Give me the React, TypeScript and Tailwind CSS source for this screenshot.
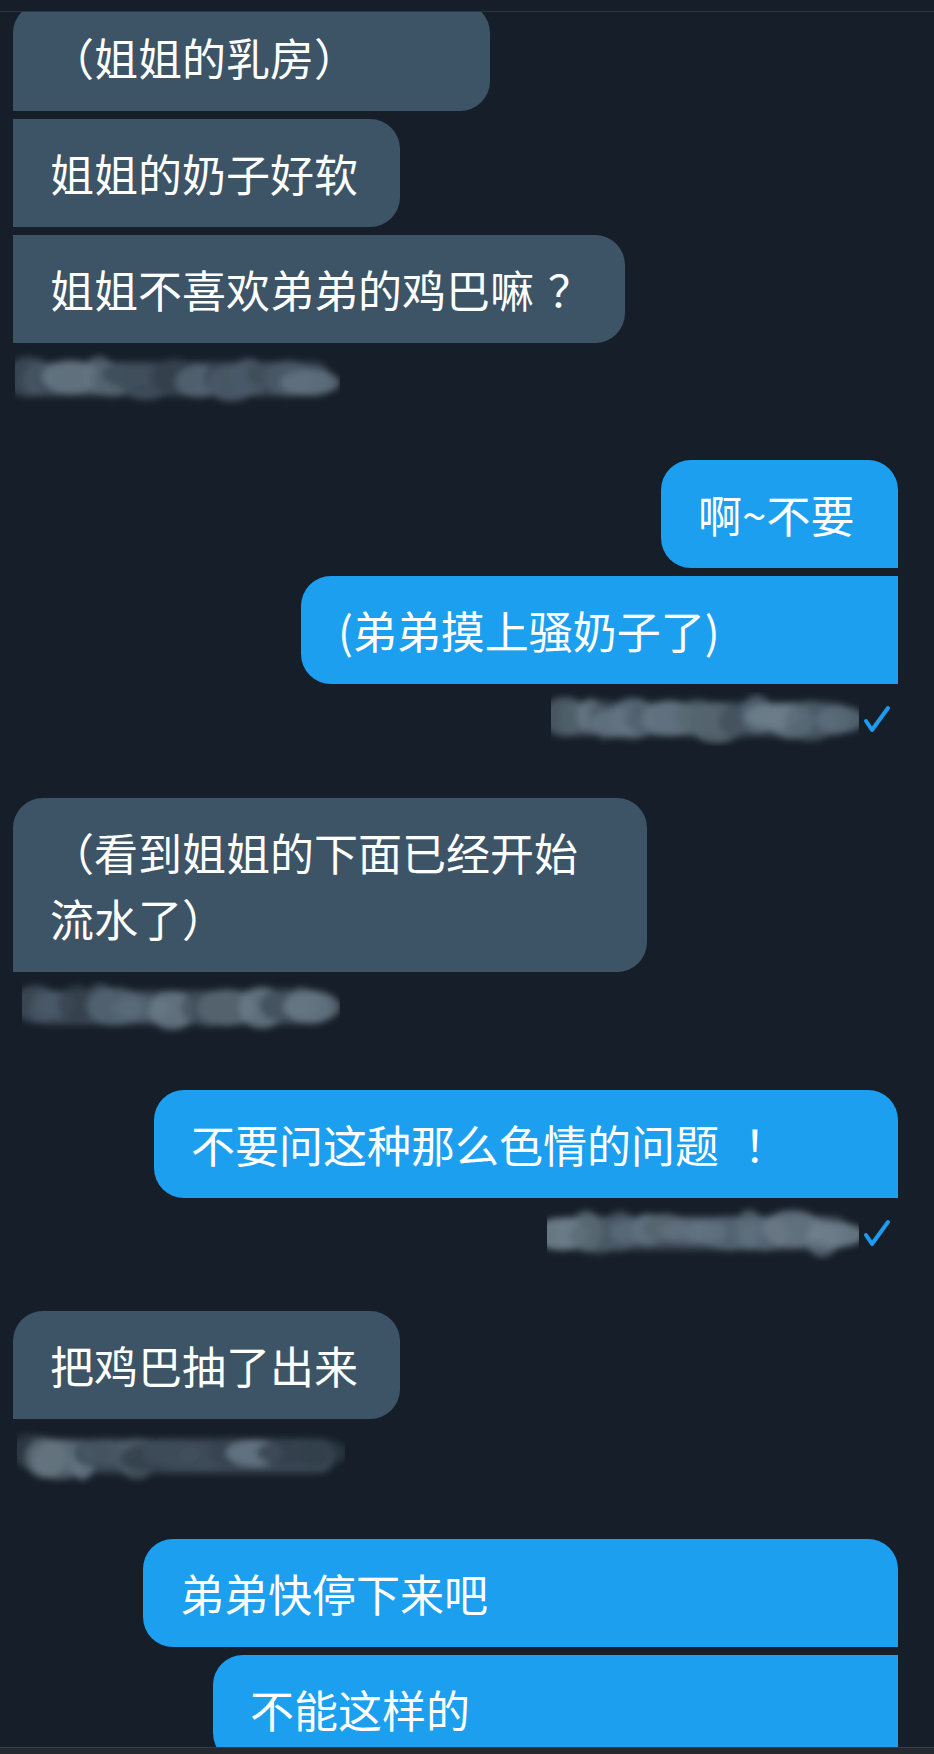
import React, { useId } from 'react';

type Side = 'left' | 'right';

interface Msg {
  text: string;
  width: string;
  corners: string;
  margin: string;
}

interface Group {
  side: Side;
  margin: string;
  msgs: Msg[];
  stamp?: { width: number; margin: string; height: number };
}

const groups: Group[] = [
  {
    side: 'left',
    margin: '-mt-[9px]',
    msgs: [
      { text: '（姐姐的乳房）', width: 'w-[477px]', corners: 'rounded-tl-[30px] rounded-r-[30px]', margin: '' },
      { text: '姐姐的奶子好软', width: 'w-[387px]', corners: 'rounded-r-[30px]', margin: 'mt-[8px]' },
      { text: '姐姐不喜欢弟弟的鸡巴嘛？', width: 'w-[612px]', corners: 'rounded-r-[30px]', margin: 'mt-[8px]' },
    ],
    stamp: { width: 325, margin: 'mt-[8px] ml-[2px]', height: 56 },
  },
  {
    side: 'right',
    margin: 'mt-[53px]',
    msgs: [
      { text: '啊~不要', width: 'w-[237px]', corners: 'rounded-t-[30px] rounded-bl-[30px]', margin: '' },
      { text: '(弟弟摸上骚奶子了)', width: 'w-[597px]', corners: 'rounded-l-[30px]', margin: 'mt-[8px]' },
    ],
    stamp: { width: 308, margin: 'mt-[8px]', height: 54 },
  },
  {
    side: 'left',
    margin: 'mt-[52px]',
    msgs: [
      {
        text: '（看到姐姐的下面已经开始流水了）',
        width: 'w-[634px]',
        corners: 'rounded-t-[30px] rounded-br-[30px]',
        margin: '',
      },
    ],
    stamp: { width: 318, margin: 'mt-[8px] ml-[9px]', height: 55 },
  },
  {
    side: 'right',
    margin: 'mt-[55px]',
    msgs: [
      {
        text: '不要问这种那么色情的问题！',
        width: 'w-[744px]',
        corners: 'rounded-t-[30px] rounded-bl-[30px]',
        margin: '',
      },
    ],
    stamp: { width: 312, margin: 'mt-[6px]', height: 58 },
  },
  {
    side: 'left',
    margin: 'mt-[49px]',
    msgs: [
      { text: '把鸡巴抽了出来', width: 'w-[387px]', corners: 'rounded-t-[30px] rounded-br-[30px]', margin: '' },
    ],
    stamp: { width: 328, margin: 'mt-[8px] ml-[4px]', height: 58 },
  },
  {
    side: 'right',
    margin: 'mt-[54px]',
    msgs: [
      { text: '弟弟快停下来吧', width: 'w-[755px]', corners: 'rounded-t-[30px] rounded-bl-[30px]', margin: '' },
      { text: '不能这样的', width: 'w-[685px]', corners: 'rounded-l-[30px]', margin: 'mt-[8px]' },
    ],
  },
];

// full-width ？ and ！ sit further right in their em cell on the phone font
const renderText = (text: string) =>
  text.split(/([？！])/).map((part, i) =>
    part === '？' ? (
      <span key={i} className="inline-block w-[1em] pl-[0.32em]">
        {part}
      </span>
    ) : part === '！' ? (
      <span key={i} className="inline-block w-[1em] pl-[0.56em]">
        {part}
      </span>
    ) : (
      part
    )
  );

// blurred-out timestamp, drawn as cloudy grey blotches
const Smudge: React.FC<{ width: number; height: number; seed: number }> = ({ width, height, seed }) => {
  const id = useId().replace(/:/g, '');
  let s = seed;
  const rnd = () => {
    s = (s * 9301 + 49297) % 233280;
    return s / 233280;
  };
  const palette = ['#4b5a68', '#5f707e', '#3f4d5a', '#6f7f8c', '#55656f', '#647482', '#33404c'];
  const blobs = [];
  const mid = height / 2;
  let x = 14;
  let i = 0;
  while (x < width - 16) {
    const rx = 12 + rnd() * 18;
    const ry = 12 + rnd() * 9;
    blobs.push(
      <ellipse
        key={i++}
        cx={x}
        cy={mid + (rnd() - 0.5) * 10}
        rx={rx}
        ry={ry}
        fill={palette[Math.floor(rnd() * palette.length)]}
        opacity={0.55 + rnd() * 0.4}
      />
    );
    x += rx * (0.6 + rnd() * 0.6);
  }
  return (
    <svg width={width} height={height} viewBox={`0 0 ${width} ${height}`}>
      <defs>
        <filter id={`b${id}`} x="-10%" y="-40%" width="120%" height="180%">
          <feGaussianBlur stdDeviation="3" />
        </filter>
      </defs>
      <g filter={`url(#b${id})`}>
        <rect x={8} y={mid - 17} width={width - 18} height={34} rx={16} fill="#3a4754" />
        {blobs}
      </g>
    </svg>
  );
};

const Check = () => (
  <svg width="28" height="30" viewBox="0 0 28 30" className="shrink-0">
    <polyline
      points="3,17 9,26 25,4"
      fill="none"
      stroke="#1d9bf0"
      strokeWidth="4"
      strokeLinecap="round"
      strokeLinejoin="round"
    />
  </svg>
);

export default function App() {
  return (
    <div className="w-[934px] h-[1754px] bg-[#161f29] flex flex-col overflow-hidden font-['Noto_Sans_CJK_SC',sans-serif] text-white">
      <div className="h-[12px] shrink-0 border-b border-[#2a3540]" />

      <div className="flex-1 overflow-hidden flex flex-col">
        {groups.map((g, gi) => (
          <div key={gi} className={`flex flex-col ${g.margin} ${g.side === 'left' ? 'items-start pl-[13px]' : 'items-end pr-[36px]'}`}>
            {g.msgs.map((m, mi) => (
              <div
                key={mi}
                className={`${m.width} ${m.corners} ${m.margin} ${
                  g.side === 'left' ? 'bg-[#3d5466]' : 'bg-[#1d9ff0]'
                } px-[37px] py-[21px] text-[44px] leading-[66px] shrink-0`}
              >
                {renderText(m.text)}
              </div>
            ))}
            {g.stamp && g.side === 'left' && (
              <div className={`-ml-[13px] ${g.stamp.margin}`}>
                <Smudge width={g.stamp.width} height={g.stamp.height} seed={gi * 37 + 11} />
              </div>
            )}
            {g.stamp && g.side === 'right' && (
              <div className={`flex items-center gap-[4px] mr-[7px] ${g.stamp.margin}`}>
                <Smudge width={g.stamp.width} height={g.stamp.height} seed={gi * 53 + 7} />
                <Check />
              </div>
            )}
          </div>
        ))}
      </div>

      <div className="h-[7px] shrink-0 bg-[#23292f] border-t border-[#353d45]" />
    </div>
  );
}
